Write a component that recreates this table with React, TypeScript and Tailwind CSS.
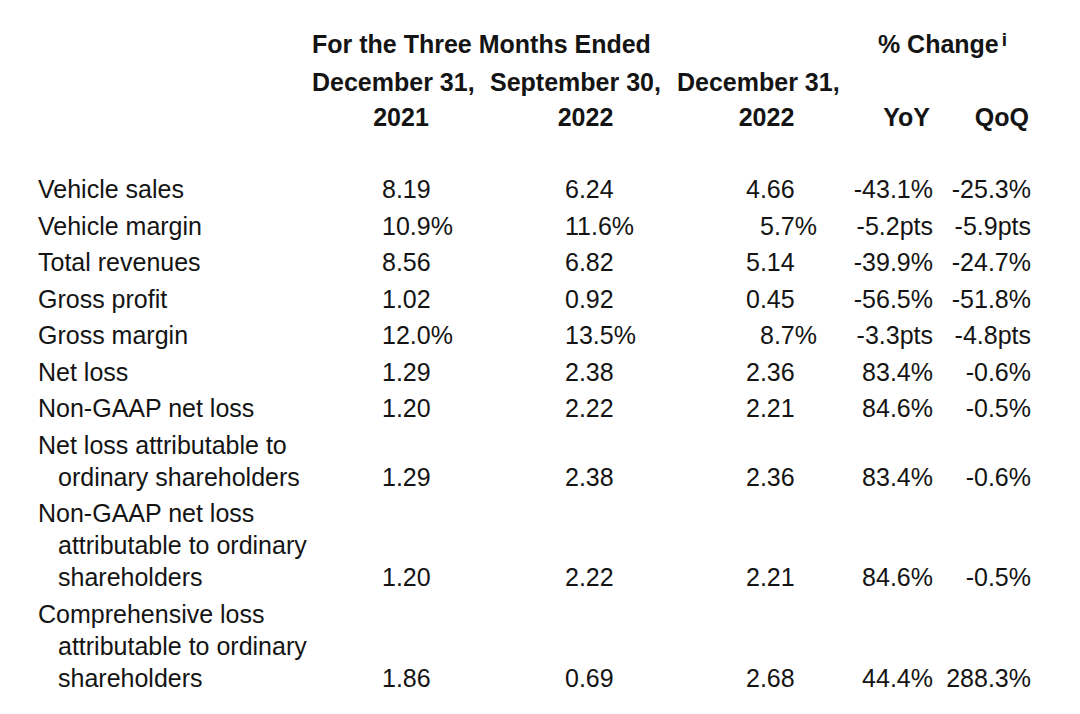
import React from "react";

type Row = {
  label: string[];
  q1: string;
  q2: string;
  q3: string;
  yoy: string;
  qoq: string;
  shift?: boolean;
};

// figures in billions, as in the press release table
const rows: Row[] = [
  { label: ["Vehicle sales"], q1: "8.19", q2: "6.24", q3: "4.66", yoy: "-43.1%", qoq: "-25.3%" },
  { label: ["Vehicle margin"], q1: "10.9%", q2: "11.6%", q3: "5.7%", yoy: "-5.2pts", qoq: "-5.9pts", shift: true },
  { label: ["Total revenues"], q1: "8.56", q2: "6.82", q3: "5.14", yoy: "-39.9%", qoq: "-24.7%" },
  { label: ["Gross profit"], q1: "1.02", q2: "0.92", q3: "0.45", yoy: "-56.5%", qoq: "-51.8%" },
  { label: ["Gross margin"], q1: "12.0%", q2: "13.5%", q3: "8.7%", yoy: "-3.3pts", qoq: "-4.8pts", shift: true },
  { label: ["Net loss"], q1: "1.29", q2: "2.38", q3: "2.36", yoy: "83.4%", qoq: "-0.6%" },
  { label: ["Non-GAAP net loss"], q1: "1.20", q2: "2.22", q3: "2.21", yoy: "84.6%", qoq: "-0.5%" },
  {
    label: ["Net loss attributable to", "ordinary shareholders"],
    q1: "1.29", q2: "2.38", q3: "2.36", yoy: "83.4%", qoq: "-0.6%",
  },
  {
    label: ["Non-GAAP net loss", "attributable to ordinary", "shareholders"],
    q1: "1.20", q2: "2.22", q3: "2.21", yoy: "84.6%", qoq: "-0.5%",
  },
  {
    label: ["Comprehensive loss", "attributable to ordinary", "shareholders"],
    q1: "1.86", q2: "0.69", q3: "2.68", yoy: "44.4%", qoq: "288.3%",
  },
];

const cols = "grid grid-cols-[274px_178px_187px_173px_85px_100px]";

const App = () => {
  return (
    <div
      className="w-[1080px] h-[714px] bg-white text-[#141414] pl-[38px] pt-[26px] overflow-hidden"
      style={{ fontFamily: '"Liberation Sans", Arial, sans-serif' }}
    >
      {/* Header */}
      <div className={`${cols} font-bold text-[25px] whitespace-nowrap`}>
        <div className="col-start-2 col-span-3 h-[36px] leading-[36px]">
          For the Three Months Ended
        </div>
        <div className="col-span-2 h-[36px] leading-[36px] text-center">
          % Change
          <span className="text-[19px] ml-[3px] relative -top-[7px]">i</span>
        </div>

        <div className="col-start-2 h-[40px] leading-[40px]">December 31,</div>
        <div className="h-[40px] leading-[40px]">September 30,</div>
        <div className="h-[40px] leading-[40px]">December 31,</div>
        <div className="col-span-2" />

        <div className="col-start-2 h-[30px] leading-[30px] text-center">2021</div>
        <div className="h-[30px] leading-[30px] text-center pl-[4px]">2022</div>
        <div className="h-[30px] leading-[30px] text-center pl-[6px]">2022</div>
        <div className="h-[30px] leading-[30px] text-right pr-[5px]">YoY</div>
        <div className="h-[30px] leading-[30px] text-right pr-[6px]">QoQ</div>
      </div>

      {/* Body */}
      <div className={`${cols} gap-y-[4.5px] mt-[41px] text-[25px] leading-[32px] whitespace-nowrap`}>
        {rows.map((r, i) => (
          <React.Fragment key={i}>
            <div>
              {r.label.map((l, j) => (
                <div key={j} className={j > 0 ? "pl-[20px]" : ""}>
                  {l}
                </div>
              ))}
            </div>
            <div className="self-end pl-[70px]">{r.q1}</div>
            <div className="self-end pl-[75px]">{r.q2}</div>
            <div className={`self-end ${r.shift ? "pl-[83px]" : "pl-[69px]"}`}>{r.q3}</div>
            <div className="self-end text-right pr-[2px]">{r.yoy}</div>
            <div className="self-end text-right pr-[4px]">{r.qoq}</div>
          </React.Fragment>
        ))}
      </div>
    </div>
  );
};

export default App;
